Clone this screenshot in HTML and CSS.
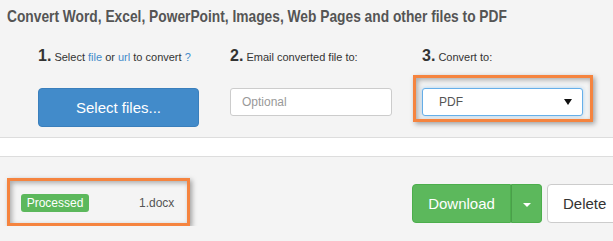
FILE: index.html
```html
<!DOCTYPE html>
<html lang="en">
<head>
    <meta charset="UTF-8">
    <title>Convert to PDF</title>
    <link rel="stylesheet" href="styles.css">
</head>
<body>
    <h1 class="title">Convert Word, Excel, PowerPoint, Images, Web Pages and other files to PDF</h1>

    <div class="steps">
        <div class="step">
            <div class="step-label"><span class="step-num">1.</span> Select <a href="#">file</a> or <a href="#">url</a> to convert <a href="#">?</a></div>
            <button class="select-btn" type="button">Select files...</button>
        </div>
        <div class="step">
            <div class="step-label"><span class="step-num">2.</span> Email converted file to:</div>
            <input class="email-input" type="text" placeholder="Optional">
        </div>
        <div class="step">
            <div class="step-label"><span class="step-num">3.</span> Convert to:</div>
            <div class="select-wrap">
                <select class="format-select">
                    <option>PDF</option>
                </select>
            </div>
        </div>
    </div>

    <div class="band"></div>

    <div class="files">
        <div class="file-info">
            <span class="badge">Processed</span>
            <span class="file-name">1.docx</span>
        </div>
        <div class="actions">
            <div class="split-btn">
                <button class="download-btn" type="button">Download</button>
                <button class="caret-btn" type="button"><span class="caret"></span></button>
            </div>
            <button class="delete-btn" type="button">Delete</button>
        </div>
    </div>
</body>
</html>
```

FILE: styles.css
```css
* {
    margin: 0;
    padding: 0;
    box-sizing: border-box;
}

body {
    font-family: 'Liberation Sans', Arial, sans-serif;
    background: #f4f4f4;
    color: #333;
    overflow: hidden;
}

.title {
    font-size: 17px;
    line-height: 20px;
    font-weight: bold;
    color: #555;
    margin: 7px 0 0 7px;
    white-space: nowrap;
    transform: scaleX(0.81);
    transform-origin: left center;
}

.steps {
    display: flex;
    gap: 30px;
    padding: 19px 0 10px 38px;
}

.step {
    width: 162px;
}

.step-label {
    font-size: 11px;
    line-height: 20px;
    height: 20px;
    margin-bottom: 22px;
    white-space: nowrap;
}

.step-num {
    font-size: 16px;
    font-weight: bold;
    color: #333;
}

.step-label a {
    color: #428bca;
    text-decoration: none;
}

.select-btn {
    width: 161px;
    height: 39px;
    background: #428bca;
    border: 1px solid #3a7fbc;
    border-radius: 4px;
    color: #fff;
    font-family: inherit;
    font-size: 15px;
}

.email-input {
    width: 162px;
    height: 28px;
    padding: 0 11px;
    border: 1px solid #ccc;
    border-radius: 3px;
    background: #fff;
    font-family: inherit;
    font-size: 12px;
    outline: none;
}

.email-input::placeholder {
    color: #999;
}

.select-wrap {
    position: relative;
    width: 161px;
}

.format-select {
    appearance: none;
    -webkit-appearance: none;
    width: 161px;
    height: 28px;
    padding: 0 16px;
    border: 1px solid #66afe9;
    border-radius: 3px;
    background: #fff;
    color: #555;
    font-family: inherit;
    font-size: 12px;
    box-shadow: 0 0 4px rgba(102, 175, 233, 0.5);
}

/* select arrow */
.select-wrap::before {
    content: '';
    position: absolute;
    right: 11px;
    top: 11px;
    border-left: 4px solid transparent;
    border-right: 4px solid transparent;
    border-top: 6px solid #111;
    pointer-events: none;
}

/* highlight round the select */
.select-wrap::after {
    content: '';
    position: absolute;
    top: -13px;
    left: -9px;
    right: -10px;
    bottom: -6px;
    border: 3px solid #f5843f;
    box-shadow: 2px 2px 5px rgba(0, 0, 0, 0.35), inset 2px 2px 5px rgba(0, 0, 0, 0.3);
    pointer-events: none;
}

.band {
    height: 20px;
    background: #fff;
    border-top: 1px solid #ddd;
    border-bottom: 1px solid #ddd;
}

.files {
    display: flex;
    align-items: center;
    padding: 21px 0 0 7px;
}

.file-info {
    display: flex;
    align-items: center;
    flex-shrink: 0;
    width: 183px;
    height: 48px;
    padding: 2px 0 0 11px;
    border: 3px solid #f5843f;
    box-shadow: 2px 2px 5px rgba(0, 0, 0, 0.35), inset 2px 2px 5px rgba(0, 0, 0, 0.3);
}

.badge {
    display: inline-block;
    width: 68px;
    height: 18px;
    line-height: 18px;
    background: #5cb85c;
    border-radius: 3px;
    color: #fff;
    font-size: 12px;
    text-align: center;
}

.file-name {
    margin-left: 50px;
    font-size: 12px;
    color: #555;
}

.actions {
    display: flex;
    flex-shrink: 0;
    gap: 5px;
    margin-left: 222px;
    margin-top: 3px;
}

.split-btn {
    display: flex;
}

.download-btn,
.caret-btn {
    height: 39px;
    background: #5cb85c;
    border: 1px solid #4cae4c;
    color: #fff;
    font-family: inherit;
    font-size: 15px;
}

.download-btn {
    width: 99px;
    border-radius: 4px 0 0 4px;
}

.caret-btn {
    width: 31px;
    border-left: 1px solid #4a9f4a;
    border-radius: 0 4px 4px 0;
}

.caret {
    display: inline-block;
    border-left: 4px solid transparent;
    border-right: 4px solid transparent;
    border-top: 4px solid #fff;
    vertical-align: middle;
}

.delete-btn {
    width: 80px;
    height: 39px;
    flex-shrink: 0;
    background: #fff;
    border: 1px solid #ccc;
    border-radius: 4px;
    color: #333;
    font-family: inherit;
    font-size: 15px;
    text-align: left;
    padding-left: 15px;
}
```
